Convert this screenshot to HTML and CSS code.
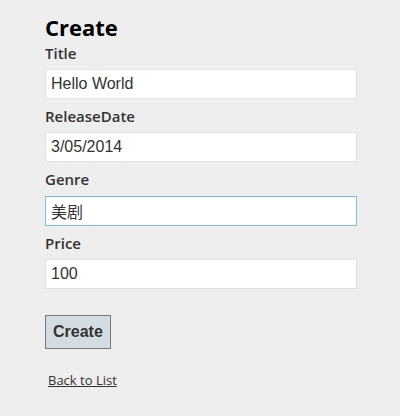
FILE: index.html
```html
<!DOCTYPE html>
<html>
<head>
<meta charset="utf-8">
<link rel="stylesheet" href="styles.css">
</head>
<body>
<main class="page">
  <h2 class="heading">Create</h2>
  <form class="form">
    <div class="field">
      <label class="label">Title</label>
      <input class="input" type="text" value="Hello World">
    </div>
    <div class="field">
      <label class="label">ReleaseDate</label>
      <input class="input" type="text" value="3/05/2014">
    </div>
    <div class="field">
      <label class="label">Genre</label>
      <input class="input input-focus" type="text" value="美剧">
    </div>
    <div class="field">
      <label class="label">Price</label>
      <input class="input" type="text" value="100">
    </div>
    <div class="actions">
      <button class="submit" type="button">Create</button>
    </div>
  </form>
  <div class="back"><a class="link" href="#">Back to List</a></div>
</main>
</body>
</html>
```

FILE: styles.css
```css
html, body {
  margin: 0;
  padding: 0;
  background: #efeeef;
}
body {
  font-family: "Open Sans", "Noto Sans", sans-serif;
  color: #333;
}
.page {
  padding: 14px 0 0 45px;
}
.heading {
  margin: 0;
  font-size: 22px;
  line-height: 27.6px;
  font-weight: 700;
  color: #000;
}
.form {
  margin: 0;
}
.field {
  display: flex;
  flex-direction: column;
  align-items: flex-start;
}
.label {
  font-size: 15px;
  font-weight: 600;
  line-height: 22.4px;
  color: #333;
}
.input {
  box-sizing: border-box;
  width: 312px;
  height: 30px;
  margin: 5px 0 6px 0;
  padding: 5px;
  border: 1px solid #e2e2e2;
  background: #fff;
  color: #333;
  font-family: "Liberation Sans", Arial, "Noto Sans CJK SC", sans-serif;
  font-size: 16px;
  outline: none;
}
.input-focus {
  border-color: #7ac0da;
}
.actions {
  padding-top: 20px;
}
.submit {
  box-sizing: border-box;
  height: 34px;
  padding: 0 7px;
  background: #d3dce0;
  border: 1px solid #787878;
  color: #333;
  font-family: "Liberation Sans", Arial, sans-serif;
  font-size: 16px;
  font-weight: 700;
}
.back {
  padding: 22px 0 0 3px;
  font-size: 13px;
  line-height: 18px;
}
.link {
  color: #333;
  text-decoration: underline;
}
```
